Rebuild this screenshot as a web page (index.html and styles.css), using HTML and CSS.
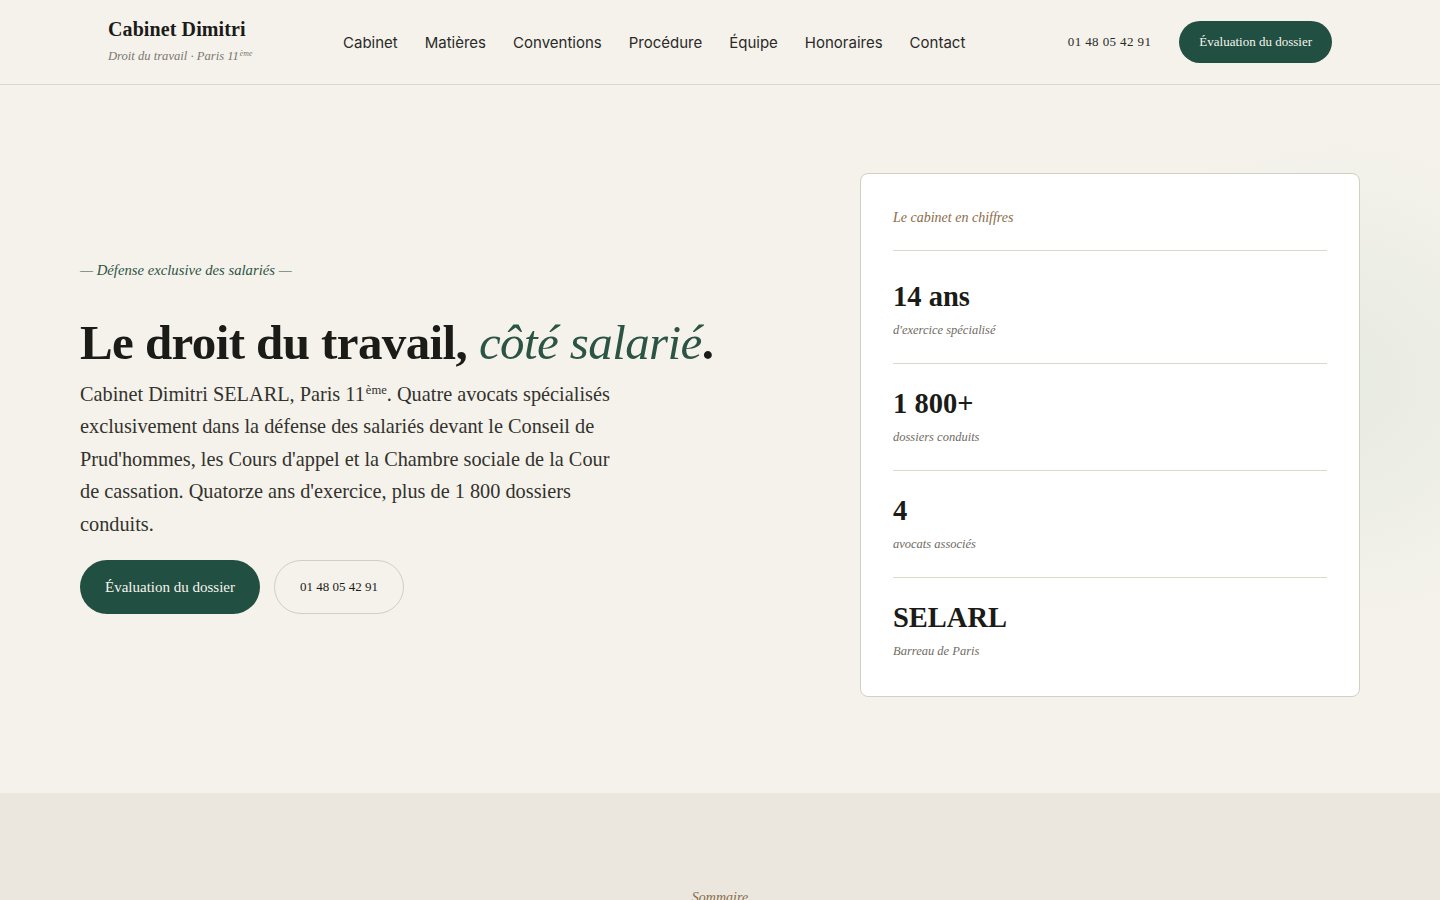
FILE: index.html
```html
<!DOCTYPE html>
<html lang="fr">
<head>
    <meta charset="UTF-8">
    <meta name="viewport" content="width=device-width, initial-scale=1.0">
    <title>Cabinet Dimitri — Droit du travail, Paris 11ème</title>
    <link rel="stylesheet" href="styles.css">
</head>
<body>
    <header class="site-header">
        <a class="brand" href="#">
            <span class="brand-name">Cabinet Dimitri</span>
            <span class="brand-sub">Droit du travail · Paris 11<sup>ème</sup></span>
        </a>
        <nav class="main-nav">
            <a href="#cabinet">Cabinet</a>
            <a href="#matieres">Matières</a>
            <a href="#conventions">Conventions</a>
            <a href="#procedure">Procédure</a>
            <a href="#equipe">Équipe</a>
            <a href="#honoraires">Honoraires</a>
            <a href="#contact">Contact</a>
        </nav>
        <div class="header-actions">
            <a class="header-phone" href="tel:0148054291">01 48 05 42 91</a>
            <a class="btn btn-primary btn-small" href="#evaluation">Évaluation du dossier</a>
        </div>
    </header>

    <section class="hero">
        <div class="hero-text">
            <p class="eyebrow">— Défense exclusive des salariés —</p>
            <h1>Le droit du travail, <em>côté salarié</em>.</h1>
            <p class="lead">Cabinet Dimitri SELARL, Paris 11<sup>ème</sup>. Quatre avocats spécialisés exclusivement dans la défense des salariés devant le Conseil de Prud'hommes, les Cours d'appel et la Chambre sociale de la Cour de cassation. Quatorze ans d'exercice, plus de 1 800 dossiers conduits.</p>
            <div class="hero-buttons">
                <a class="btn btn-primary" href="#evaluation">Évaluation du dossier</a>
                <a class="btn btn-outline" href="tel:0148054291">01 48 05 42 91</a>
            </div>
        </div>

        <aside class="figures">
            <p class="figures-title">Le cabinet en chiffres</p>
            <div class="figure">
                <strong>14 ans</strong>
                <span>d'exercice spécialisé</span>
            </div>
            <div class="figure">
                <strong>1 800+</strong>
                <span>dossiers conduits</span>
            </div>
            <div class="figure">
                <strong>4</strong>
                <span>avocats associés</span>
            </div>
            <div class="figure">
                <strong>SELARL</strong>
                <span>Barreau de Paris</span>
            </div>
        </aside>
    </section>

    <section class="summary">
        <p class="summary-label">Sommaire</p>
    </section>
</body>
</html>
```

FILE: styles.css
```css
body {
    margin: 0;
    font-family: "Liberation Serif", serif;
    color: #1b1b18;
    background-color: #f5f2ec;
}
a {
    color: inherit;
    text-decoration: none;
}
sup {
    margin-left: 1px;
    font-size: 0.62em;
    line-height: 0;
    vertical-align: 0.55em;
}

/* header */
.site-header {
    height: 84px;
    padding: 0 108px;
    display: flex;
    align-items: center;
    border-bottom: 1px solid #dcd7cd;
}
.brand {
    width: 147px;
    display: flex;
    flex-direction: column;
    margin-top: -2px;
}
.brand-name {
    font-size: 20px;
    line-height: 22px;
    font-weight: bold;
    letter-spacing: 0.1px;
    color: #1b1b18;
    white-space: nowrap;
}
.brand-sub {
    margin-top: 8px;
    font-size: 12.6px;
    line-height: 16px;
    font-style: italic;
    color: #7b776f;
    white-space: nowrap;
}
.main-nav {
    display: flex;
    gap: 27px;
    margin-left: 88px;
}
.main-nav a {
    font-family: Inter, sans-serif;
    font-size: 15px;
    color: #2a2a27;
}
.header-actions {
    display: flex;
    align-items: center;
    gap: 28px;
    margin-left: auto;
}
.header-phone {
    font-size: 13px;
    letter-spacing: 0.4px;
    color: #2a2a27;
}

/* buttons */
.btn {
    display: inline-flex;
    align-items: center;
    justify-content: center;
    box-sizing: border-box;
    height: 54px;
    padding: 0 25px;
    border-radius: 27px;
    font-size: 15px;
}
.btn-primary {
    background-color: #214f41;
    color: #f7f4ee;
}
.btn-outline {
    border: 1px solid #d3cdc2;
    color: #1b1b18;
    font-size: 13px;
    padding: 0 25px;
}
.btn-small {
    height: 42px;
    padding: 0 20px;
    border-radius: 21px;
    font-size: 13px;
}

/* hero */
.hero {
    display: flex;
    align-items: center;
    justify-content: space-between;
    padding: 88px 80px 96px;
    background: radial-gradient(circle at 1340px 295px, #e8ebe2 0, #edeee6 120px, rgba(245, 242, 236, 0) 250px);
}
.hero-text {
    width: 660px;
    padding-top: 4px;
}
.eyebrow {
    margin: 0 0 36px;
    font-size: 14.7px;
    line-height: 20px;
    font-style: italic;
    color: #2d5445;
}
.hero h1 {
    margin: 0;
    font-size: 49px;
    line-height: 54px;
    font-weight: bold;
    letter-spacing: -0.6px;
    white-space: nowrap;
}
.hero h1 em {
    font-weight: normal;
    color: #2b5444;
}
.lead {
    width: 548px;
    margin: 8px 0 20px;
    font-size: 20.3px;
    line-height: 32.4px;
    color: #33322d;
}
.hero-buttons {
    display: flex;
    gap: 14px;
}

/* card with figures */
.figures {
    width: 500px;
    box-sizing: border-box;
    padding: 32px 32px 12px;
    background-color: #fff;
    border: 1px solid #d3cfc4;
    border-radius: 8px;
}
.figures-title {
    margin: 0;
    padding: 4px 0 24px;
    font-size: 14px;
    line-height: 16px;
    font-style: italic;
    color: #8a6b47;
    border-bottom: 1px solid #dcd8ce;
}
.figure {
    display: flex;
    flex-direction: column;
    padding: 24px 0 25px;
    border-bottom: 1px solid #dcd8ce;
}
.figure:first-of-type {
    padding-top: 30px;
}
.figure:last-child {
    border-bottom: none;
}
.figure strong {
    font-size: 28.5px;
    line-height: 32px;
    color: #1b1b18;
}
.figure span {
    margin-top: 10px;
    font-size: 12.5px;
    line-height: 15px;
    font-style: italic;
    color: #6f6b63;
}

/* summary */
.summary {
    background-color: #ebe7df;
    padding: 97px 0 0;
    height: 120px;
}
.summary-label {
    margin: 0;
    text-align: center;
    font-size: 14px;
    font-style: italic;
    color: #8a6b47;
}
```
